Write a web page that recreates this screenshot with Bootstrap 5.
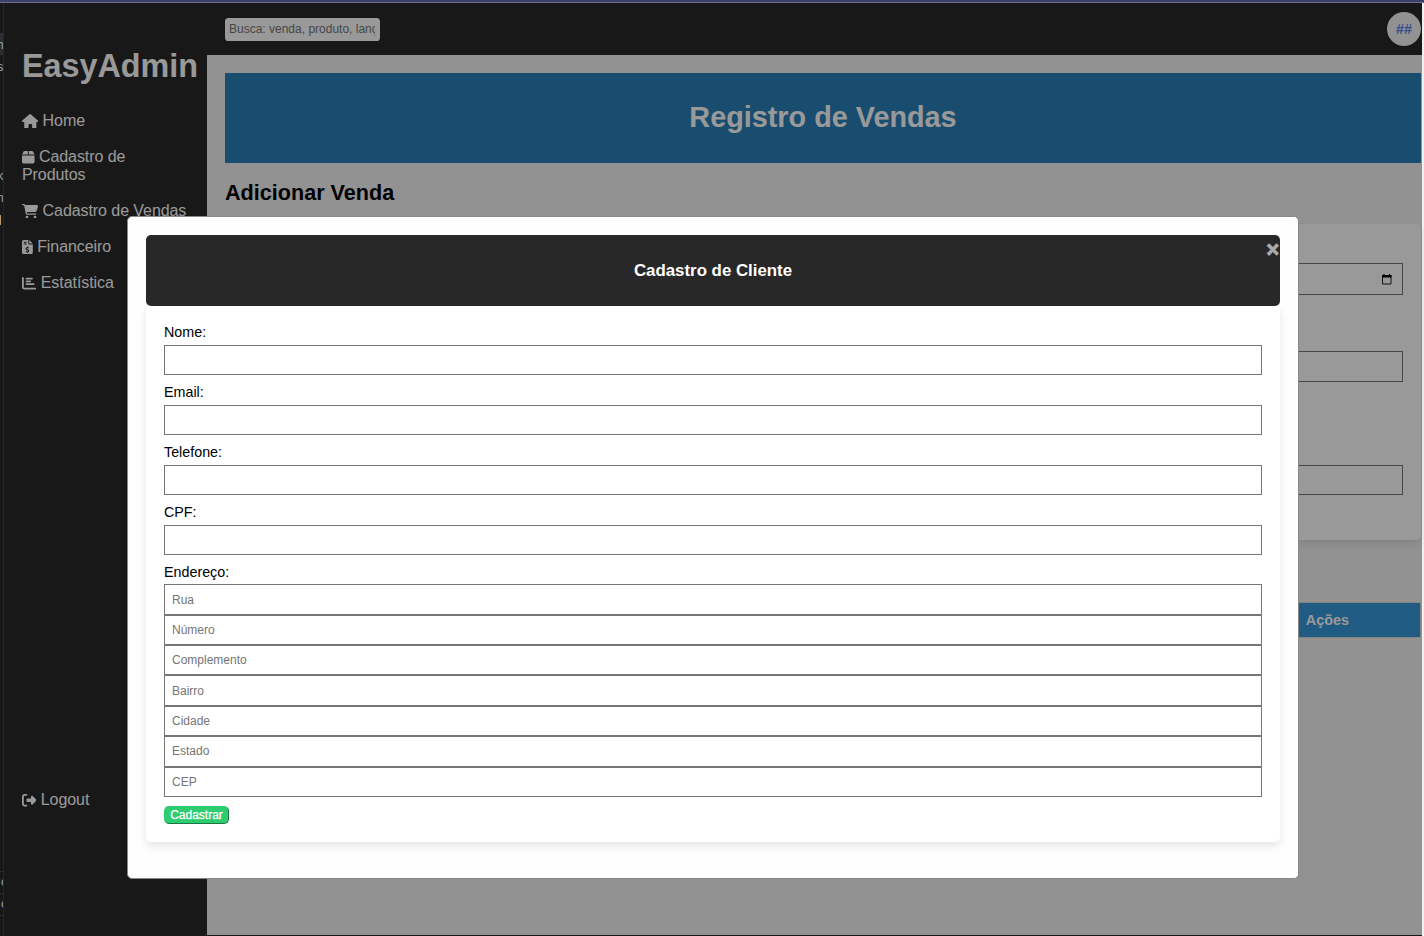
<!DOCTYPE html>
<html lang="pt-BR">
<head>
<meta charset="utf-8">
<title>EasyAdmin</title>
<link href="https://cdn.jsdelivr.net/npm/bootstrap@5.3.0/dist/css/bootstrap.min.css" rel="stylesheet">
<style>
body{width:1424px;height:936px;overflow:hidden;background:#181818;font-family:"Liberation Sans",Arial,sans-serif;color:#000;line-height:1.15}
.topedge{height:3px;background:#3b4169;border-bottom:1px solid #6e6e8c}
.frame{height:933px}
.leftedge{width:4px;background:#181818;border-right:1px solid #262626;position:relative;overflow:hidden;font:12px/14px "Liberation Mono",monospace;color:#8fa9bd}
.leftedge span{position:absolute;right:-1px;white-space:nowrap}
.leftedge i{position:absolute;left:0;width:4px;height:1px;background:#2b2b2b}
.leftedge .sel{top:30px;height:22px;background:#2d2d33}
.leftedge .bar{top:212px;width:1px;height:10px;background:#b99a63}
.rightedge{width:2px;background:#f0f0f0}
.appwin{width:1418px;height:932px;position:relative}
.side{width:203px;background:#282828;padding:0 9px 0 18px;color:#fff}
.brand{font-size:32.3px;line-height:36px;font-weight:700;margin:45px 0 0;white-space:nowrap}
.side a{display:block;color:#fff;text-decoration:none;font-size:16px;letter-spacing:-.07px;line-height:18px;margin-bottom:18px}
.side svg{fill:#fff;height:14.4px;vertical-align:-2px;display:inline-block}
.side nav{margin-top:28px;padding-right:8px}
.side .logout{margin-bottom:126px}
.topbar2{height:52px;background:#282828;padding:0 1px 0 18px}
.search{width:155px;height:23px;border:0;border-radius:3.6px;padding:0 5px 0 4px;font-size:12px;color:#757575;background:#fff}
.search::placeholder{color:#757575}
.avatar{width:34px;height:34px;border-radius:50%;background:#f4f4f4;color:#5a86e8;font-weight:700;font-size:14.4px}
.mainarea{background:#f4f4f4;padding:18px 1px 0 18px}
.banner{height:90px;background:#2980b9;color:#fff;font-size:28.8px;font-weight:700}
h2.sec{font-size:21.6px;font-weight:700;line-height:25px;margin:17px 0 19px}
.formbox{height:316px;background:#fff;border-radius:5px;box-shadow:0 4px 8px rgba(0,0,0,.1);padding:39px 18px 0}
.ipt{height:31px;border:1px solid #767676;background:transparent}
.ipt.date{height:32px;padding-right:10px}
.ipt.second{margin-top:56px}
.ipt.third{margin-top:83px;height:30px}
.thead2{margin-top:62px;height:36px;border:1px solid #ddd;background:#3498db;color:#fff;font-weight:700;font-size:14.4px;padding-right:71px}
.veil{position:absolute;inset:0;background:rgba(0,0,0,.4)}
.dlg{position:absolute;left:123px;top:213px;width:1172px;height:663px;background:#fefefe;border:1px solid #888;border-radius:5px;padding:18px}
.dhead{height:71px;background:#282828;border-radius:5px;color:#fff;font-weight:700;font-size:16.85px;position:relative}
.xbtn{position:absolute;right:1px;top:1px;font-size:21.5px;line-height:28px;color:#aaa;font-weight:700;-webkit-text-stroke:1px #aaa}
.dbody{height:536px;background:#fff;border-radius:5px;box-shadow:0 4px 8px rgba(0,0,0,.1);padding:18px 18px 0}
.dbody label{display:block;font-size:14.3px;line-height:17px;margin-bottom:4px}
.dbody input{display:block;width:100%;height:30px;border:1px solid #767676;padding:0 7px;font-size:12px;background:#fff}
.dbody input::placeholder{color:#757575;opacity:1}
.fld{height:60px}
.dbody .addr label{margin-bottom:3.45px}
.dbody .addr input{height:30.35px}
.save{width:65px;height:18px;margin-top:9px;background:#2ecc71;color:#fff;border:1px outset #2ecc71;border-radius:5px;font-size:12px;line-height:14px;padding:0;-webkit-text-stroke:.25px #fff;display:block}
</style>
</head>
<body>
<div class="topedge"></div>
<div class="frame d-flex">
<div class="leftedge flex-shrink-0">
  <i class="sel"></i><span style="top:36px">n</span><span style="top:58px">s</span>
  <span style="top:167px">k</span><span style="top:189px">n</span><i class="bar"></i>
  <i style="top:868px"></i><span style="top:873px;right:-5px">c</span><i style="top:890px"></i><span style="top:895px;right:-5px">c</span><i style="top:912px"></i>
</div>
<div>
<div class="appwin d-flex">
  <aside class="side d-flex flex-column flex-shrink-0">
    <h1 class="brand">EasyAdmin</h1>
    <nav>
      <a href="#"><svg viewBox="0 0 576 512"><path d="M575.800 255.500c0 18-15 32.100-32 32.100h-32l.7 160.200c0 2.700-.2 5.400-.5 8.100V472c0 22.100-17.900 40-40 40h-72c-22.100 0-40-17.900-40-40v-88c0-17.700-14.300-32-32-32h-64c-17.700 0-32 14.300-32 32v88c0 22.100-17.900 40-40 40h-72c-22.100 0-40-17.900-40-40V287.600H32c-18 0-32-14-32-32.100 0-9 3-17 10-24L266.400 8c7-7 15-8 22-8s15 2 21 7l255.400 224.500c8 7 12 15 11 24z"/></svg> Home</a>
      <a href="#"><svg viewBox="0 0 448 512"><path d="M50.700 58.500 0 160h208V32H93.700C75.500 32 58.900 42.300 50.700 58.500zM240 160h208L397.300 58.500C389.100 42.300 372.500 32 354.300 32H240v128zm208 32H0v224c0 35.300 28.700 64 64 64h320c35.300 0 64-28.700 64-64V192z"/></svg> Cadastro de Produtos</a>
      <a href="#" class="text-nowrap"><svg viewBox="0 0 576 512"><path d="M0 24C0 10.700 10.700 0 24 0h45.500c22 0 41.500 12.800 50.600 32h411c26.300 0 45.500 25 38.600 50.400l-41 152.300c-8.500 31.400-37 53.300-69.500 53.300H170.700l5.400 28.500c2.200 11.300 12.100 19.500 23.600 19.500H488c13.300 0 24 10.700 24 24s-10.700 24-24 24H199.700c-34.600 0-64.300-24.600-70.700-58.500L77.400 54.500C76.700 50.700 73.400 48 69.500 48H24C10.700 48 0 37.300 0 24z"/><circle cx="176" cy="464" r="48"/><circle cx="464" cy="464" r="48"/></svg> Cadastro de Vendas</a>
      <a href="#"><svg viewBox="0 0 384 512"><path fill-rule="evenodd" d="M64 0C28.700 0 0 28.700 0 64v384c0 35.300 28.700 64 64 64h256c35.300 0 64-28.700 64-64V160H256c-17.700 0-32-14.300-32-32V0H64zM256 0v128h128zM64 64h96v32H64zM64 128h96v32H64zM176 232h32v30c15 2 28 6 40 10l-9 32c-20-6-38-10-54-8-20 3-22 20-4 28 30 14 78 18 75 66-2 26-22 40-48 45v29h-32v-29c-18-2-34-7-48-13l11-31c22 9 44 14 62 10 20-4 20-23 2-31-32-14-78-20-75-66 2-25 20-39 48-44z"/></svg> Financeiro</a>
      <a href="#"><svg viewBox="0 0 512 512"><path d="M32 32c17.700 0 32 14.300 32 32v336c0 8.800 7.200 16 16 16h400c17.700 0 32 14.300 32 32s-14.300 32-32 32H80c-44.200 0-80-35.800-80-80V64c0-17.700 14.300-32 32-32z"/><rect x="128" y="64" width="256" height="64" rx="32"/><rect x="128" y="160" width="192" height="64" rx="32"/><rect x="128" y="256" width="320" height="64" rx="32"/></svg> Estatística</a>
    </nav>
    <a href="#" class="mt-auto logout"><svg viewBox="0 0 512 512"><path d="M377.900 105.900 500.700 228.700c7.200 7.200 11.300 17.100 11.300 27.300s-4.100 20.100-11.300 27.300L377.900 406.100c-6.400 6.400-15 9.900-24 9.900-18.700 0-33.900-15.200-33.900-33.900V320H192c-17.700 0-32-14.300-32-32v-64c0-17.700 14.300-32 32-32h128v-62.100c0-18.700 15.200-33.900 33.900-33.900 9 0 17.600 3.600 24 9.900zM160 96H96c-17.700 0-32 14.300-32 32v256c0 17.700 14.300 32 32 32h64c17.700 0 32 14.300 32 32s-14.300 32-32 32H96c-53 0-96-43-96-96V128c0-53 43-96 96-96h64c17.700 0 32 14.300 32 32s-14.300 32-32 32z"/></svg> Logout</a>
  </aside>
  <div class="flex-grow-1 d-flex flex-column">
    <header class="topbar2 d-flex align-items-center justify-content-between">
      <input class="search" placeholder="Busca: venda, produto, lançamento">
      <div class="avatar d-flex align-items-center justify-content-center">##</div>
    </header>
    <main class="mainarea flex-grow-1">
      <div class="banner d-flex align-items-center justify-content-center">Registro de Vendas</div>
      <h2 class="sec">Adicionar Venda</h2>
      <div class="formbox">
        <div class="ipt date d-flex align-items-center justify-content-end"><svg width="11" height="11" viewBox="0 0 11 11"><path d="M1.500 1.500h8.500v8.500H1.500z" fill="none" stroke="#222" stroke-linejoin="round"/><path d="M1 1h9.500v2.500H1zM2.500 0h1v1h-1zM8 0h1v1H8z"/></svg></div>
        <div class="ipt second"></div>
        <div class="ipt third"></div>
      </div>
      <div class="thead2 d-flex align-items-center justify-content-end">Ações</div>
    </main>
  </div>
  <div class="veil"></div>
  <section class="dlg">
    <div class="dhead d-flex align-items-center justify-content-center">Cadastro de Cliente<span class="xbtn">×</span></div>
    <form class="dbody">
      <div class="fld"><label>Nome:</label><input></div>
      <div class="fld"><label>Email:</label><input></div>
      <div class="fld"><label>Telefone:</label><input></div>
      <div class="fld"><label>CPF:</label><input></div>
      <div class="addr"><label>Endereço:</label>
        <input placeholder="Rua"><input placeholder="Número"><input placeholder="Complemento"><input placeholder="Bairro"><input placeholder="Cidade"><input placeholder="Estado"><input placeholder="CEP"></div>
      <button type="button" class="save">Cadastrar</button>
    </form>
  </section>
</div>
</div>
<div class="rightedge flex-shrink-0"></div>
</div>
<script src="https://cdn.jsdelivr.net/npm/bootstrap@5.3.0/dist/js/bootstrap.bundle.min.js"></script>
</body>
</html>
